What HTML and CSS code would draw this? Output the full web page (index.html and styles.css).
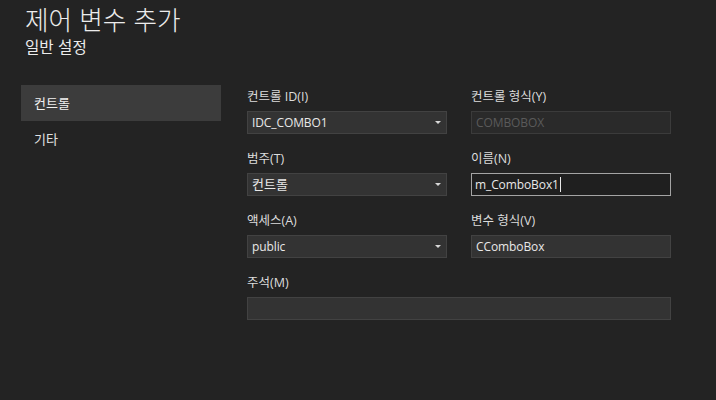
FILE: index.html
```html
<!DOCTYPE html>
<html lang="ko">
<head>
<meta charset="utf-8">
<title>제어 변수 추가</title>
<link rel="stylesheet" href="styles.css">
</head>
<body>
<header class="header">
  <h1 class="title">제어 변수 추가</h1>
  <div class="subtitle">일반 설정</div>
</header>
<div class="main">
  <nav class="sidebar">
    <div class="nav-item active">컨트롤</div>
    <div class="nav-item">기타</div>
  </nav>
  <div class="form">
    <div class="field">
      <div class="label">컨트롤 ID(I)</div>
      <div class="box combo"><span class="value">IDC_COMBO1</span><span class="arrow"></span></div>
    </div>
    <div class="field">
      <div class="label">컨트롤 형식(Y)</div>
      <div class="box disabled"><span class="value">COMBOBOX</span></div>
    </div>
    <div class="field">
      <div class="label">범주(T)</div>
      <div class="box combo"><span class="value ko">컨트롤</span><span class="arrow"></span></div>
    </div>
    <div class="field">
      <div class="label">이름(N)</div>
      <div class="box focused"><span class="value">m_ComboBox1</span><span class="caret"></span></div>
    </div>
    <div class="field">
      <div class="label">액세스(A)</div>
      <div class="box combo"><span class="value">public</span><span class="arrow"></span></div>
    </div>
    <div class="field">
      <div class="label">변수 형식(V)</div>
      <div class="box"><span class="value">CComboBox</span></div>
    </div>
    <div class="field wide">
      <div class="label">주석(M)</div>
      <div class="box"><span class="value"></span></div>
    </div>
  </div>
</div>
</body>
</html>
```
FILE: styles.css
```css
html, body {
  margin: 0;
  padding: 0;
  background: #232323;
  color: #e6e6e6;
  font-family: "Open Sans", "Noto Sans CJK KR", sans-serif;
  height: 100%;
}

.header {
  padding: 3px 0 0 25px;
}

.title {
  margin: 0;
  font-size: 25.6px;
  line-height: 31px;
  color: #ececec;
  font-family: "Noto Sans CJK KR", sans-serif;
  font-weight: 300;
}

.subtitle {
  margin-top: 1px;
  font-size: 15.6px;
  line-height: 22px;
  color: #ececec;
  font-family: "Noto Sans CJK KR", sans-serif;
}

.main {
  display: flex;
  gap: 26px;
  padding-left: 21px;
  margin-top: 28px;
}

.sidebar {
  width: 200px;
  display: flex;
  flex-direction: column;
}

.nav-item {
  height: 36px;
  line-height: 36px;
  padding-left: 13px;
  font-size: 13px;
  font-family: "Noto Sans CJK KR", sans-serif;
  color: #e0e0e0;
}

.nav-item.active {
  background: #3c3c3c;
  color: #f0f0f0;
}

.form {
  padding-top: 3px;
  display: grid;
  grid-template-columns: 200px 200px;
  column-gap: 24px;
  row-gap: 16px;
}

.field.wide {
  grid-column: 1 / span 2;
}

.label {
  height: 18px;
  line-height: 18px;
  font-size: 12.5px;
  color: #dcdcdc;
  margin-bottom: 5px;
}

.box {
  box-sizing: border-box;
  height: 23px;
  background: #333333;
  border: 1px solid #424242;
  display: flex;
  align-items: center;
  padding-left: 4px;
  padding-right: 4px;
  font-size: 12px;
  letter-spacing: -0.1px;
  color: #e8e8e8;
  position: relative;
}

.value {
  flex: 1;
  white-space: nowrap;
  line-height: 21px;
}

.value.ko {
  font-size: 13px;
  letter-spacing: 0;
}

.arrow {
  width: 0;
  height: 0;
  border-left: 3px solid transparent;
  border-right: 3px solid transparent;
  border-top: 3px solid #d8d8d8;
  margin-right: 1px;
}

.box.disabled {
  background: #2a2a2a;
  border-color: #3b3b3b;
  color: #5a5a5a;
}

.box.focused {
  background: #1f1f1f;
  border-color: #a4a4a4;
  padding-left: 3px;
}

.box.focused .value {
  flex: 0 0 auto;
}

.caret {
  width: 1px;
  height: 15px;
  background: #e8e8e8;
  margin-left: 1px;
  margin-right: auto;
}
```
